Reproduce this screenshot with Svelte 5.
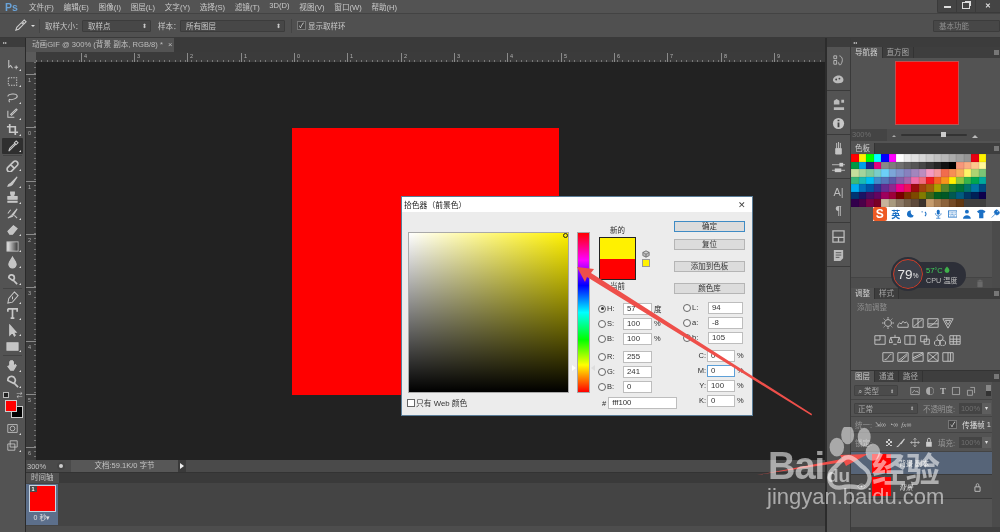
<script>
  const menus = ['文件(F)','编辑(E)','图像(I)','图层(L)','文字(Y)','选择(S)','滤镜(T)','3D(D)','视图(V)','窗口(W)','帮助(H)'];
  const swatches = [
    ['#ff0000','#fff000','#00ff00','#00ffff','#0000ff','#ff00ff','#ffffff','#ebebeb','#e1e1e1','#d7d7d7','#cccccc','#c2c2c2','#b7b7b7','#acacac','#a0a0a0','#959595','#e60012','#fff100'],
    ['#009944','#00a0e9','#1d2088','#e4007f','#898989','#7d7d7d','#707070','#626262','#555555','#464646','#363636','#262626','#111111','#000000','#f7977a','#fbad82','#fdc68c','#fff799'],
    ['#c6df9c','#a4d49d','#81ca9d','#7bcdc9','#6ccff7','#7ca6d8','#8293ca','#8881be','#a286bd','#bc8dbf','#f49bc1','#f5999d','#f16c4d','#f68e54','#fbaf5a','#fff467','#acd372','#7cc576'],
    ['#3bb878','#1abbb4','#00bff3','#438cca','#5574b9','#5c5aa8','#855fa8','#a763a9','#ef6ea8','#f16d7e','#ee1d24','#f16522','#f7941d','#fff100','#8fc63d','#37b44a','#00a650','#00a99e'],
    ['#00aeef','#0072bc','#0054a5','#2f3192','#652c91','#91278f','#ed008c','#ee105a','#9d0a0f','#a1410d','#a36209','#aba000','#588528','#197b30','#007236','#00736a','#0076a4','#004a80'],
    ['#003471','#1b1464','#440e62','#630460','#9e005d','#9e0039','#790000','#7a2e00','#7d4900','#827b00','#3e6617','#045f20','#005826','#005951','#005b7f','#003663','#002157','#0d004c'],
    ['#32004b','#4b0049','#7b0046','#7a0026','#c8b39b','#a99a7e','#8c7965','#75604b','#5f4a3a','#3d332c','#c69c6d','#a77c50','#8c623a','#744a25','#613813']
  ];
  const tools = [
    {d:'M3 1v8l2-2 2 3M9 9h4M11 7v4'},
    {d:'M2.5 3h9v8h-9z', dash:true},
    {d:'M2 6c0-3 9-4 10-1 1 3-6 5-8 4-1 0-1 2 0 3'},
    {d:'M2 4v7h7M5 8l6-6 1 1-6 6z'},
    {d:'M4 1v9h9M1 4h9v9', fat:true},
    {d:'M3 12l1-3 5-5 1 1-5 5zM9 3l2-2 2 2-2 2z', active:true, sep:true},
    {d:'M2 9l6-6a2.5 2.5 0 0 1 4 4l-6 6a2.5 2.5 0 0 1-4-4zM5 6l4 4', fat:true},
    {d:'M2 12c1-3 2-2 3-3l7-7-5 8c-1 1-2 2-5 2z', fill:true},
    {d:'M5 1h4v2l-1 3h4v3H2V6h4L5 3zM2 11h10v1H2z', fill:true},
    {d:'M2 12l4-3 6-7-5 8zM2 7l3-4M9 9l3 3'},
    {d:'M2 9l6-6 4 3-5 6H4z', fill:true},
    {grad:true},
    {d:'M7 1c2 4 4 5 4 8a4 4 0 0 1-8 0c0-3 2-4 4-8z', fill:true},
    {d:'M3 6a3 3 0 1 1 4 3zM7 8l5 5', fat:true, sep:true},
    {d:'M9 1l4 4-6 7-5 1 1-5zM7 6v3'},
    {d:'M2 2h10v3M7 2v10M5 12h4M2 2v3', fat:true},
    {d:'M4 1v11l3-3 2 4 1-1-2-3h3z', fill:true},
    {d:'M1 3h12v8H1z', fill:true, sep:true},
    {d:'M4 7V3h1v3-4h1v4-4h1v4-3h1v5l2-2 1 1-3 5H5L2 8z', fill:true},
    {d:'M2 6a4 4 0 1 1 6 3zM8 8l5 5', fat:true}
  ];
  const adj = [
    ['M7 3a4 4 0 1 0 .01 0M7 0v2M7 12v2M0 7h2M12 7h2M2 2l1 1M11 11l1 1M12 2l-1 1M2 12l1-1','M1 12V9l2-2 2 1 2-3 2 2 2-1 2 2v4z','M1 2h12v10H1zM2 11L12 3M7 2v10','M1 2h12v10H1zM2 11c3-1 7-3 10-8M1 8h12','M1 2h12L7 13zM4 4h6L7 9z'],
    ['M1 2h12v10H1zM7 2v5H1','M7 1v3M2 4h10M2 4l-2 6h4zM12 4l-2 6h4zM5 12h4','M1 2h12v10H1zM7 2v10','M2 2h7v7H2zM6 6h6v6H6z','M7 1a3.5 3.5 0 1 0 .01 0M4 7a3.5 3.5 0 1 0 .01 0M10 7a3.5 3.5 0 1 0 .01 0','M1 2h12v10H1zM1 6h12M1 9h12M5 2v10M9 2v10'],
    ['M1 2h12v10H1zM3 10c5 0 4-6 8-6','M1 2h12v10H1zM2 11L12 3M4 12l8-7','M1 2h12v10H1zM1 10L13 4M1 8l12-6','M1 2h12v10H1zM1 2l12 10M13 2L1 12','M1 2h12v10H1zM7 2v10M10 2v10']
  ];
  const rulerTop = [[45,'4'],[98,'3'],[151,'2'],[205,'1'],[258,'0'],[311,'1'],[365,'2'],[418,'3'],[471,'4'],[525,'5'],[578,'6'],[631,'7'],[685,'8'],[738,'9']];
  const rulerLeft = [[12,'1'],[65,'0'],[119,'1'],[172,'2'],[225,'3'],[279,'4'],[332,'5'],[385,'6']];
</script>

<div class="app">
  <header class="menubar">
    <span class="ps">Ps</span>
    <nav class="menus">{#each menus as m}<span>{m}</span>{/each}</nav>
    <div class="winctl">
      <span class="wb"><i class="min"></i></span>
      <span class="wb"><i class="res"></i></span>
      <span class="wb close">✕</span>
    </div>
  </header>

  <div class="options">
    <svg class="dropper" viewBox="0 0 14 14" width="13" height="13"><path d="M2 12l1-3 5-5 2 2-5 5zM9 3l2-2 2 2-2 2z" fill="none" stroke="#ccc" stroke-width="1.2"/></svg>
    <span class="caret"></span>
    <span class="sep"></span>
    <span class="lbl lw1">取样大小：</span>
    <span class="sel s1">取样点<b>⬍</b></span>
    <span class="lbl lw2">样本：</span>
    <span class="sel s2">所有图层<b>⬍</b></span>
    <span class="sep s3"></span>
    <span class="chk">✓</span>
    <span class="lbl">显示取样环</span>
    <span class="sel workspace">基本功能</span>
  </div>

  <div class="main">
    <aside class="toolbar">
      <div class="tb-head">▸▸</div>
      <div class="tb-grip"></div>
      {#each tools as t}
        <div class="tool" class:active={t.active}>
          <svg viewBox="0 0 14 14" width="13" height="13">
            {#if t.grad}
              <defs><linearGradient id="gr"><stop offset="0" stop-color="#eee"/><stop offset="1" stop-color="#333"/></linearGradient></defs>
              <rect x="1" y="2" width="12" height="10" fill="url(#gr)" stroke="#bbb"/>
            {:else}
              <path d={t.d} fill={t.fill ? '#c4c4c4' : 'none'} stroke="#c8c8c8" stroke-width={t.fat ? 1.8 : 1.1} stroke-dasharray={t.dash ? '1.5 1.2' : 'none'}/>
            {/if}
          </svg>
        </div>
        {#if t.sep}<div class="tool-sep"></div>{/if}
      {/each}
      <div class="mini-colors">
        <span class="mini-a"></span><span class="mini-b">⇄</span>
      </div>
      <div class="fgbg"><span class="bg"></span><span class="fg"></span></div>
      <div class="tool small"><svg viewBox="0 0 14 14" width="13" height="11"><path d="M1 2h12v10H1z" fill="none" stroke="#ccc"/><circle cx="7" cy="7" r="3" fill="none" stroke="#ccc"/></svg></div>
      <div class="tool small"><svg viewBox="0 0 14 14" width="13" height="11"><path d="M4 1h9v8H4zM1 5h9v8H1z" fill="#555" stroke="#ccc"/></svg></div>
    </aside>

    <section class="center">
      <div class="tabbar"><div class="doc-tab">动画GIF @ 300% (背景 副本, RGB/8) * <em>×</em></div></div>
      <div class="workarea">
        <div class="ruler-corner"></div>
        <div class="ruler-top">{#each rulerTop as r}<span style="left:{r[0]}px">{r[1]}</span>{/each}</div>
        <div class="ruler-left">{#each rulerLeft as r}<span style="top:{r[0]}px">{r[1]}</span>{/each}</div>
        <div class="canvas"></div>
      </div>
      <div class="status">
        <span class="zoomv">300%</span>
        <span class="st-icon"></span>
        <span class="docinfo">文档:59.1K/0 字节</span>
        <span class="st-arrow"></span>
      </div>
      <div class="timeline">
        <div class="tl-tabs"><span>时间轴</span></div>
        <div class="tl-body">
          <div class="frame">
            <div class="thumb"><b>1</b></div>
            <div class="delay">0 秒▾</div>
          </div>
        </div>
        <div class="tl-foot"></div>
      </div>
    </section>

    <div class="dock">
      <div class="dock-head"></div>
      <div class="dock-group">
        <svg viewBox="0 0 14 14" width="13" height="13"><path d="M2 2h3v3H2zM2 7h3v4H2zM8 2c4 1 4 6 1 10M8 12l-1-3" fill="none" stroke="#bbb"/></svg>
        <svg viewBox="0 0 14 14" width="13" height="13"><path d="M1 8c0-4 5-6 8-5s4 4 3 6c-1 3-10 3-11-1z" fill="#bbb"/><circle cx="4.500" cy="7" r="1" fill="#444"/><circle cx="8" cy="6" r="1" fill="#444"/></svg>
      </div>
      <div class="dock-group">
        <svg viewBox="0 0 14 14" width="13" height="13"><path d="M2 3l3-2 3 2v4H2zM10 2h3v3h-3zM2 10h11v3H2z" fill="#bbb"/></svg>
        <svg viewBox="0 0 14 14" width="13" height="13"><circle cx="7" cy="7" r="6" fill="#c8c8c8"/><path d="M7 3v1.500M7 6v5" stroke="#444" stroke-width="2"/></svg>
      </div>
      <div class="dock-group">
        <svg viewBox="0 0 14 14" width="13" height="13"><path d="M4 7h6v6H4zM5 1v6M7 0v7M9 1v6" fill="#c4c4c4" stroke="#c4c4c4"/></svg>
        <svg viewBox="0 0 14 14" width="13" height="13"><path d="M0 4h14M0 10h14" stroke="#bbb"/><rect x="8" y="2" width="4" height="4" fill="#ccc"/><rect x="3" y="8" width="7" height="4" fill="#ccc"/></svg>
      </div>
      <div class="dock-group">
        <span class="dock-a">A|</span>
        <span class="dock-p">¶</span>
      </div>
      <div class="dock-group">
        <svg viewBox="0 0 14 14" width="13" height="13"><path d="M1 1h12v12H1zM1 8h12M7 8v5" fill="none" stroke="#bbb" stroke-width="1.4"/></svg>
        <svg viewBox="0 0 14 14" width="13" height="13"><path d="M2 1h10v9l-3 3H2z" fill="#bbb"/><path d="M4 4h6M4 6.500h6M4 9h4" stroke="#555"/></svg>
      </div>
    </div>

    <div class="panels">
      <div class="panel-head"><span>◂◂</span></div>

      <div class="ptabs"><span class="on">导航器</span><span>直方图</span><i class="pmenu"></i></div>
      <div class="nav-view"><div class="nav-red"></div></div>
      <div class="nav-foot">
        <span class="nav-pct">300%</span>
        <span class="tri sm"></span>
        <span class="track"><i></i></span>
        <span class="tri"></span>
      </div>

      <div class="ptabs t2"><span class="on">色板</span><i class="pmenu"></i></div>
      <div class="swatches">
        {#each swatches as row}
          <div class="swrow">{#each row as c}<span style="background:{c}"></span>{/each}</div>
        {/each}
      </div>
      <div class="sw-fill"><div class="sw-bar"><svg viewBox="0 0 14 14" width="8" height="9"><path d="M3 4h8v9H3zM2 2.500h10M5 2.500V1h4v1.500" fill="#6a6a6a" stroke="#6a6a6a"/></svg></div></div>

      <div class="ptabs"><span class="on">调整</span><span>样式</span><i class="pmenu"></i></div>
      <div class="adj">
        <div class="adj-title">添加调整</div>
        {#each adj as row}
          <div class="adj-row">
            {#each row as d}
              <svg viewBox="0 0 14 14" width="12" height="12"><path {d} fill="none" stroke="#c4c4c4" stroke-width="1.1"/></svg>
            {/each}
          </div>
        {/each}
      </div>

      <div class="ptabs"><span class="on">图层</span><span>通道</span><span>路径</span><i class="pmenu"></i></div>
      <div class="layers">
        <div class="lrow filter">
          <span class="minisel f1">⌕ 类型 <b>⬍</b></span>
          <span class="ficons">
            <svg viewBox="0 0 14 14" width="10" height="10"><path d="M1 2h12v10H1zM3 10l3-4 2 2 2-1 2 3" fill="none" stroke="#bbb"/></svg>
            <svg viewBox="0 0 14 14" width="10" height="10"><circle cx="7" cy="7" r="5.500" fill="#aaa"/><path d="M7 2a5 5 0 0 1 0 10z" fill="#555"/></svg>
            <span class="ft">T</span>
            <svg viewBox="0 0 14 14" width="10" height="10"><path d="M2 2h10v10H2z" fill="none" stroke="#bbb"/></svg>
            <svg viewBox="0 0 14 14" width="10" height="10"><path d="M2 6h7v7H2zM6 2h6v8" fill="none" stroke="#bbb"/></svg>
          </span>
          <span class="ftoggle"></span>
        </div>
        <div class="lrow blend">
          <span class="minisel f2">正常 <b>⬍</b></span>
          <span class="dimlbl">不透明度:</span>
          <span class="num">100%</span><span class="numbtn">▾</span>
        </div>
        <div class="lrow unify">
          <span class="dimlbl">统一:</span>
          <span class="gl">⇲∞</span><span class="gl">◔∞</span><span class="gl"><i>fx</i>∞</span>
          <span class="chk c2">✓</span><span class="prop">传播帧</span><span class="one">1</span>
        </div>
        <div class="lrow lockrow">
          <span class="dimlbl lock-l">锁定:</span>
          <span class="checker"></span>
          <svg viewBox="0 0 14 14" width="11" height="11"><path d="M1 13c3 0 3-2 4-3l7-8-5 7" fill="none" stroke="#ccc" stroke-width="1.5"/></svg>
          <svg viewBox="0 0 14 14" width="11" height="11"><path d="M7 1v12M1 7h12M5 3l2-2 2 2M5 11l2 2 2-2M3 5L1 7l2 2M11 5l2 2-2 2" fill="none" stroke="#ccc"/></svg>
          <svg viewBox="0 0 14 14" width="11" height="11"><path d="M3 6h8v7H3z" fill="#ccc"/><path d="M5 6V3a2 2 0 0 1 4 0v3" fill="none" stroke="#ccc" stroke-width="1.3"/></svg>
          <span class="dimlbl fill-l">填充:</span>
          <span class="num">100%</span><span class="numbtn">▾</span>
        </div>
        <div class="layer selected">
          <span class="eye"></span><span class="lthumb"></span><span class="lname">背景 副本</span>
        </div>
        <div class="layer">
          <svg class="eye-ic" viewBox="0 0 14 10" width="9" height="7"><path d="M1 5c3-5 9-5 12 0-3 5-9 5-12 0z" fill="none" stroke="#ccc"/><circle cx="7" cy="5" r="1.500" fill="#ccc"/></svg>
          <span class="lthumb"></span><span class="lname it">背景</span>
          <svg class="lock-ic" viewBox="0 0 14 14" width="9" height="9"><path d="M3 6h8v7H3z" fill="none" stroke="#bbb" stroke-width="1.500"/><path d="M5 6V3a2 2 0 0 1 4 0v3" fill="none" stroke="#bbb" stroke-width="1.300"/></svg>
        </div>
        <div class="lempty"></div>
        <div class="lfoot"></div>
      </div>
    </div>
  </div>

  <div class="artboard"></div>

  <div class="dialog">
    <div class="dtitle"><span>拾色器（前景色）</span><em>✕</em></div>
    <div class="dbody">
      <div class="left-col">
        <div class="pick-row">
          <div class="field"><span class="cursor"></span></div>
          <div class="hue"><span class="h-l"></span><span class="h-r"></span></div>
        </div>
        <label class="web"><span class="box"></span>只有 Web 颜色</label>
      </div>
      <div class="mid-col">
        <div class="preview-wrap">
          <div class="pv-col">
            <span class="pv-t">新的</span>
            <div class="pv"><i class="pv-n"></i><i class="pv-c"></i></div>
            <span class="pv-t">当前</span>
          </div>
          <div class="gamut">
            <svg viewBox="0 0 10 10" width="8" height="8"><path d="M5 1l4 2v4l-4 2-4-2V3zM1 3l4 2 4-2M5 5v4" fill="#bbb" stroke="#555" stroke-width=".8"/></svg>
            <span class="gbox"></span>
          </div>
        </div>
        <div class="vals">
          {#each [['H',57,'度',true],['S',100,'%'],['B',100,'%']] as v, i}
            <div class="vrow"><span class="radio" class:sel-r={v[3]}></span><span class="vl">{v[0]}:</span><span class="inp">{v[1]}</span><span class="unit">{v[2]}</span></div>
          {/each}
          <div class="vgap"></div>
          {#each [['R',255],['G',241],['B',0]] as v}
            <div class="vrow"><span class="radio"></span><span class="vl">{v[0]}:</span><span class="inp">{v[1]}</span></div>
          {/each}
        </div>
      </div>
      <div class="right-col">
        <div class="btns">
          <span class="btn primary">确定</span>
          <span class="btn">复位</span>
          <span class="btn g1">添加到色板</span>
          <span class="btn g1">颜色库</span>
        </div>
        <div class="vals lab">
          {#each [['L','94'],['a','-8'],['b','105']] as v}
            <div class="vrow"><span class="radio"></span><span class="vl">{v[0]}:</span><span class="inp w">{v[1]}</span></div>
          {/each}
          <div class="vgap"></div>
          {#each [['C','0'],['M','0',true],['Y','100'],['K','0']] as v}
            <div class="vrow cm"><span class="vl r">{v[0]}:</span><span class="inp n" class:focus={v[2]}>{v[1]}</span><span class="unit">%</span></div>
          {/each}
        </div>
      </div>
      <div class="hex"><span>#</span><span class="inp hx">fff100</span></div>
    </div>
  </div>

  <svg class="arrows" viewBox="0 0 1000 532" width="1000" height="532">
    <path d="M577 267L594 269 591 273 812 414 811.500 415.500 587 277 585 282z" fill="#ee4f4a"/>
    <path d="M757 475L842 459 840 455 868 454 846 466 844 462z" fill="#ee4f4a"/>
  </svg>

  <div class="wm">
    <svg class="paw" viewBox="0 0 100 100" width="72" height="72">
      <g fill="#fff" fill-opacity=".5">
        <ellipse cx="22" cy="28" rx="10" ry="13"/>
        <ellipse cx="37" cy="11" rx="9" ry="13"/>
        <ellipse cx="60" cy="14" rx="9" ry="13"/>
        <ellipse cx="72" cy="35" rx="10" ry="12"/>
      </g>
      <path d="M38 42c9 0 12 8 22 15 13 10 8 30-8 27-10-2-16-2-24 0-17 3-21-16-11-26 8-6 11-16 21-16z" fill="none" stroke="#fff" stroke-opacity=".55" stroke-width="6"/>
    </svg>
    <span class="wm-bai">Bai</span>
    <span class="wm-du">du</span>
    <span class="wm-jy">经验</span>
    <span class="wm-url">jingyan.baidu.com</span>
  </div>

  <div class="sogou">
    <span class="s-logo">S</span>
    <span class="s-t">英</span>
    <svg viewBox="0 0 12 12" width="10" height="10"><path d="M7 1a5 5 0 1 0 4 7A5 5 0 0 1 7 1z" fill="#1a6fc4"/></svg>
    <svg viewBox="0 0 12 12" width="10" height="10"><circle cx="3" cy="3" r="1" fill="#1a6fc4"/><path d="M7 3c2 2 2 4 0 6" stroke="#1a6fc4" stroke-width="1.500" fill="none"/></svg>
    <svg viewBox="0 0 12 12" width="10" height="10"><rect x="4" y="0" width="4" height="7" rx="2" fill="#1a6fc4"/><path d="M2 5c0 5 8 5 8 0M6 9v3M3 12h6" stroke="#1a6fc4" fill="none"/></svg>
    <svg viewBox="0 0 12 12" width="11" height="10"><rect x=".5" y="2" width="11" height="8" fill="none" stroke="#1a6fc4"/><path d="M2 4.500h8M2 6.500h8M3 8.500h6" stroke="#1a6fc4" stroke-dasharray="1 .7"/></svg>
    <svg viewBox="0 0 12 12" width="11" height="10"><circle cx="5" cy="3" r="2.500" fill="#1a6fc4"/><path d="M0 12c0-6 10-6 10 0z" fill="#1a6fc4"/></svg>
    <svg viewBox="0 0 12 12" width="10" height="10"><path d="M0 2l4-2h4l4 2-2 3-1-1v8H3V4L2 5z" fill="#1a6fc4"/></svg>
    <svg viewBox="0 0 12 12" width="10" height="10"><path d="M1 11l5-5a3 3 0 0 1 4-5L8 3l1 1 2-2a3 3 0 0 1-5 4" fill="#1a6fc4" stroke="#1a6fc4"/></svg>
  </div>

  <div class="cpu">
    <div class="ring">79<small>%</small></div>
    <div class="cpu-t">
      <div class="temp">57°C <svg viewBox="0 0 10 12" width="6" height="8"><path d="M5 0c3 3 4 5 4 7a4 4 0 0 1-8 0c0-2 1-4 4-7z" fill="#3fb04a"/></svg></div>
      <div class="cpu-l">CPU 温度</div>
    </div>
  </div>
</div>

<style>
  :global(body){margin:0;background:#535353;}
  .app{position:relative;width:1000px;height:532px;overflow:hidden;background:#535353;color:#c4c4c4;font:7.5px "Liberation Sans","Noto Sans CJK SC",sans-serif;display:flex;flex-direction:column;filter:blur(.35px);}

  .menubar{height:13px;display:flex;align-items:center;flex:none;background:#535353;}
  .ps{color:#6aa3d8;font:bold 10.5px "Liberation Sans",sans-serif;margin-left:5px;width:24px;}
  .menus{display:flex;gap:9.7px;font-size:7.6px;color:#c9c9c9;}
  .winctl{margin-left:auto;display:flex;align-self:flex-start;height:11.500px;background:#444;border:solid #3a3a3a;border-width:0 0 1px 1px;border-radius:0 0 0 2px;}
  .wb{width:18px;display:flex;align-items:center;justify-content:center;border-right:1px solid #3a3a3a;color:#ddd;font-size:7px;}
  .wb.close{width:24px;border-right:0;font-weight:bold;}
  .min{width:7px;height:2px;background:#ddd;display:block;margin-top:3px;}
  .res{width:6px;height:5px;border:1px solid #ddd;display:block;box-shadow:2px -2px 0 -1px #ddd;}

  .options{height:25px;flex:none;display:flex;align-items:center;border-top:1px solid #434343;border-bottom:1px solid #3a3a3a;box-sizing:border-box;background:#505050;}
  .dropper{margin-left:14px;}
  .caret{width:0;height:0;border:2px solid transparent;border-top-color:#ddd;margin:2px 0 0 4px;}
  .sep{width:1px;height:14px;background:#444;margin:0 5px 0 4px;}
  .s3{margin:0 5px 0 6px;}
  .lbl{color:#c9c9c9;font-size:7.500px;white-space:nowrap;}
  .lw1{width:37px;}
  .lw2{width:22px;}
  .sel{height:12px;box-sizing:border-box;background:#474747;border:1px solid #3c3c3c;border-radius:1px;color:#c9c9c9;display:flex;align-items:center;padding-left:5px;font-size:7.500px;position:relative;}
  .sel b{position:absolute;right:3px;font-weight:normal;font-size:6px;}
  .s1{width:69px;margin-right:7px;}
  .s2{width:105px;}
  .chk{width:9px;height:9px;box-sizing:border-box;background:#444;border:1px solid #777;color:#ddd;font-size:7px;line-height:7px;text-align:center;margin-right:2px;flex:none;}
  .workspace{margin-left:auto;width:67px;color:#8f8f8f;}

  .main{flex:1;display:flex;min-height:0;}
  .toolbar{width:26px;box-sizing:border-box;flex:none;background:#535353;border-right:1px solid #2a2a2a;display:flex;flex-direction:column;align-items:center;}
  .tb-head{height:9px;width:100%;background:#3c3c3c;font-size:4px;line-height:9px;padding-left:3px;box-sizing:border-box;flex:none;}
  .tb-grip{height:10px;flex:none;}
  .tool{width:21px;height:16.200px;flex:none;display:flex;align-items:center;justify-content:center;position:relative;}
  .tool::after{content:"";position:absolute;right:2px;bottom:2px;border:1px solid transparent;border-right-color:#ddd;border-bottom-color:#ddd;}
  .tool.active{background:#2f2f2f;border-radius:1px;}
  .tool.small{height:17px;}
  .tool-sep{width:19px;height:1px;margin:1px 0;background:#434343;flex:none;}
  .mini-colors{width:20px;height:8px;display:flex;justify-content:space-between;align-items:center;margin-top:1px;flex:none;}
  .mini-a{width:6px;height:6px;background:#222;border:1px solid #bbb;box-sizing:border-box;}
  .mini-b{font-size:6px;line-height:6px;}
  .fgbg{position:relative;width:20px;height:20px;flex:none;margin:1px 0 0;}
  .fg,.bg{position:absolute;width:10px;height:10px;border:1px solid #ccc;}
  .fg{left:2px;top:0;background:#f00;}
  .bg{left:8px;top:6px;background:#000;}

  .center{flex:1;min-width:0;display:flex;flex-direction:column;border-right:2px solid #2c2c2c;}
  .tabbar{height:14px;flex:none;background:#3a3a3a;display:flex;}
  .doc-tab{background:#535353;color:#bdbdbd;padding:0 6px;line-height:14px;font-size:7.600px;width:148px;box-sizing:border-box;white-space:nowrap;}
  .doc-tab em{font-style:normal;margin-left:3px;}
  .workarea{flex:1;display:grid;grid-template:10px 1fr / 10px 1fr;min-height:0;}
  .ruler-corner{background:#5a5a5a;}
  .ruler-top{position:relative;background:repeating-linear-gradient(90deg,#777 0 1px,transparent 1px 5.330px) bottom/100% 2px no-repeat,#3b3b3b;overflow:hidden;}
  .ruler-top span{position:absolute;top:1px;font-size:5.500px;line-height:7px;color:#b0b0b0;border-left:1px solid #8a8a8a;padding-left:2px;height:9px;}
  .ruler-left{position:relative;background:repeating-linear-gradient(#777 0 1px,transparent 1px 5.330px) right/2px 100% no-repeat,#3b3b3b;overflow:hidden;}
  .ruler-left span{position:absolute;left:0;width:10px;padding:2px 0 0 2px;box-sizing:border-box;font-size:5.500px;line-height:7px;color:#b0b0b0;border-top:1px solid #8a8a8a;}
  .canvas{background:#222;}
  .status{height:12px;flex:none;background:#4a4a4a;display:flex;align-items:center;color:#c4c4c4;}
  .zoomv{width:31px;padding-left:1px;box-sizing:border-box;}
  .st-icon{width:8px;height:8px;background:#ccc;border-radius:50%;margin-right:6px;border:2px solid #444;box-sizing:border-box;flex:none;}
  .docinfo{width:107px;height:100%;line-height:12px;text-align:center;background:#575757;}
  .st-arrow{width:8px;height:12px;background:#3a3a3a;position:relative;}
  .st-arrow::after{content:"";position:absolute;left:2px;top:3px;border:3px solid transparent;border-left:4px solid #eee;}
  .timeline{height:60px;flex:none;background:#444;display:flex;flex-direction:column;border-top:1px solid #333;box-sizing:border-box;}
  .tl-tabs{height:10px;background:#3a3a3a;flex:none;display:flex;}
  .tl-tabs span{background:#4e4e4e;padding:0 5px;line-height:10px;color:#c0c0c0;}
  .tl-body{flex:1;min-height:0;}
  .frame{width:32px;height:41px;background:#5c6f8b;margin-top:1px;box-sizing:border-box;padding:1px 2px;}
  .thumb{width:27px;height:27px;border:1px solid #c8d4e0;background:#f00;position:relative;margin:0 auto;box-sizing:border-box;}
  .thumb b{position:absolute;left:0;top:0;width:7px;height:6px;background:#4a4a4a;color:#fff;font-size:5.500px;line-height:6px;text-align:center;}
  .delay{text-align:center;color:#e0e0e0;font-size:7px;line-height:10px;margin-top:1px;}
  .tl-foot{height:6px;background:#4d4d4d;flex:none;}

  .dock{width:24px;flex:none;background:#535353;border-right:1px solid #3a3a3a;box-sizing:border-box;display:flex;flex-direction:column;align-items:center;}
  .dock-head{height:9px;width:100%;background:#3c3c3c;flex:none;}
  .dock-group{width:100%;padding:7px 0 4px;display:flex;flex-direction:column;align-items:center;gap:6px;border-bottom:1px solid #3a3a3a;box-sizing:border-box;height:44px;flex:none;}
  .dock-a{font:11px/12px "Liberation Sans",sans-serif;color:#bbb;}
  .dock-p{font:12px/12px "Liberation Serif",serif;color:#bbb;font-weight:bold;}

  .panels{width:149px;flex:none;background:#535353;display:flex;flex-direction:column;}
  .panel-head{height:9px;background:#3c3c3c;flex:none;font-size:4px;line-height:9px;padding-left:2px;}
  .ptabs{height:11px;flex:none;display:flex;background:#3e3e3e;position:relative;color:#a8a8a8;}
  .ptabs span{padding:0 4px;line-height:11px;border-right:1px solid #333;font-size:7.500px;white-space:nowrap;}
  .ptabs .on{background:#535353;color:#cfcfcf;}
  .pmenu{position:absolute;right:1px;top:3px;width:5px;height:5px;background:#777;}
  .t2{margin-top:2px;}
  .nav-view{height:71px;flex:none;display:flex;align-items:center;justify-content:center;padding-left:2px;box-sizing:border-box;}
  .nav-red{width:62px;height:62px;background:#f00;border:1px solid #c05050;margin-top:-1px;}
  .nav-foot{height:12px;flex:none;display:flex;align-items:center;background:#4c4c4c;}
  .nav-pct{width:36px;height:100%;line-height:12px;background:#444;color:#6e6e6e;padding-left:1px;box-sizing:border-box;}
  .tri{width:0;height:0;border:3px solid transparent;border-bottom:3px solid #bbb;margin:0 5px;}
  .tri.sm{border-width:2px;border-bottom-color:#aaa;}
  .track{flex:none;width:66px;height:2px;background:#333;position:relative;border-radius:1px;}
  .track i{position:absolute;left:40px;top:-2px;width:5px;height:5px;background:#ccc;}
  .swatches{flex:none;background:#3f3f3f;width:135px;height:53px;}
  .swrow{display:flex;height:7.500px;}
  .swrow span{width:7.500px;box-shadow:inset 0 0 0 .25px #0003;flex:none;}
  .sw-fill{height:81px;flex:none;position:relative;border-right:8px solid #4b4b4b;background:#535353;box-sizing:border-box;}
  .sw-bar{position:absolute;left:0;right:0;bottom:0;height:11px;background:#4d4d4d;border-top:1px solid #444;display:flex;align-items:center;justify-content:flex-end;padding-right:8px;box-sizing:border-box;}
  .adj{height:72px;flex:none;display:flex;flex-direction:column;align-items:center;border-bottom:1px solid #333;box-sizing:border-box;}
  .adj-title{align-self:flex-start;margin:4px 0 2px 6px;color:#909090;font-size:7.500px;line-height:9px;}
  .adj-row{display:flex;gap:3px;height:17px;align-items:center;justify-content:center;padding-right:16px;}
  .layers{flex:1;min-height:0;display:flex;flex-direction:column;border-right:8px solid #4b4b4b;}
  .lrow{display:flex;align-items:center;flex:none;border-bottom:1px solid #444;box-sizing:border-box;padding-left:3px;gap:4px;}
  .filter{height:18px;}
  .blend{height:17px;}
  .unify{height:16px;padding-left:4px;gap:3px;}
  .lockrow{height:19px;padding-left:4px;}
  .minisel{height:11px;background:#4b4b4b;border:1px solid #424242;box-sizing:border-box;display:flex;align-items:center;padding:0 3px;justify-content:space-between;color:#aaa;border-radius:1px;white-space:nowrap;}
  .minisel b{font-weight:normal;font-size:5px;}
  .f1{width:44px;}
  .f2{width:69px;}
  .ficons{display:flex;gap:5px;align-items:center;margin-left:8px;}
  .ft{font:bold 9px "Liberation Serif",serif;color:#bbb;}
  .ftoggle{width:5px;height:11px;background:linear-gradient(#888 50%,#333 50%);margin-left:auto;margin-right:1px;}
  .dimlbl{color:#969696;white-space:nowrap;}
  .blend .dimlbl{margin-left:1px;}
  .num{width:23px;height:11px;background:#444;color:#6f6f6f;line-height:11px;text-align:center;margin-left:auto;flex:none;}
  .numbtn{width:9px;height:11px;background:#5e5e5e;color:#ddd;line-height:11px;text-align:center;font-size:6px;flex:none;margin-left:-4px;margin-right:1px;}
  .gl{color:#bbb;font-size:7px;white-space:nowrap;}
  .gl i{font-family:"Liberation Serif",serif;}
  .c2{margin-left:auto;}
  .prop{color:#ddd;white-space:nowrap;}
  .one{color:#ddd;margin-left:-1px;padding-right:1px;}
  .lock-l{width:30px;}
  .fill-l{margin-left:auto;}
  .lockrow .num{margin-left:0;}
  .checker{width:7px;height:7px;background:conic-gradient(#ccc 25%,#555 0 50%,#ccc 0 75%,#555 0) 0 0/4px 4px;}
  .layer{height:24px;flex:none;display:flex;align-items:center;background:#4c4c4c;border-bottom:1px solid #3a3a3a;box-sizing:border-box;position:relative;}
  .layer.selected{background:#566478;height:23px;}
  .eye,.eye-ic{width:9px;margin:0 6px;flex:none;}
  .lthumb{width:19px;height:19px;background:#f00;margin-right:8px;flex:none;}
  .lname{color:#e8e8e8;font-size:7px;}
  .it{font-style:italic;}
  .lock-ic{position:absolute;right:10px;top:8px;}
  .lempty{flex:1;background:#535353;}
  .lfoot{height:5px;background:#414141;margin-right:-8px;}

  .artboard{position:absolute;left:292px;top:128px;width:267px;height:267px;background:#f00;}

  .dialog{position:absolute;left:401px;top:196px;width:352px;height:220px;background:#ececec;border:1px solid #5a7d98;box-sizing:border-box;color:#2e2e2e;font-size:7.500px;display:flex;flex-direction:column;}
  .dtitle{height:15px;background:#fff;flex:none;display:flex;align-items:center;justify-content:space-between;padding:0 6px 0 2px;font-size:7.800px;color:#222;}
  .dtitle em{font-style:normal;font-size:9px;color:#444;}
  .dbody{flex:1;display:flex;position:relative;padding:20px 0 0 6px;}
  .left-col{width:190px;flex:none;}
  .pick-row{display:flex;gap:8px;}
  .field{width:161px;height:161px;box-sizing:border-box;border:1px solid #a9a9a9;background:linear-gradient(transparent,#000),linear-gradient(90deg,#fff,#fff100);position:relative;}
  .cursor{position:absolute;right:0;top:0;width:5px;height:5px;border:1px solid #222;border-radius:50%;box-sizing:border-box;}
  .hue{width:13px;height:161px;box-sizing:border-box;border:1px solid #a9a9a9;position:relative;background:linear-gradient(#f00,#f0f 17%,#00f 33%,#0ff 50%,#0f0 67%,#ff0 83%,#f00);}
  .h-l,.h-r{position:absolute;top:132px;width:0;height:0;border:3px solid transparent;}
  .h-l{left:-6px;border-left:4px solid #fff;}
  .h-r{right:-6px;border-right:4px solid #ddd;}
  .web{display:flex;align-items:center;gap:1px;margin:4px 0 0 -1px;color:#333;font-size:7.800px;}
  .box{width:8px;height:8px;background:#fff;border:1px solid #666;box-sizing:border-box;}
  .mid-col{width:77px;flex:none;margin-top:-6px;}
  .preview-wrap{display:flex;height:75px;}
  .pv-col{width:37px;margin-left:1px;display:flex;flex-direction:column;align-items:center;}
  .pv-t{line-height:10px;height:10px;}
  .pv{width:37px;height:43px;box-sizing:border-box;border:1px solid #222;display:flex;flex-direction:column;margin-top:1px;flex:none;}
  .pv i{flex:1;display:block;}
  .pv-n{background:#fff100;}
  .pv-c{background:#f00;}
  .pv-col .pv-t:last-child{margin-top:2px;}
  .gamut{display:flex;flex-direction:column;align-items:center;gap:1px;margin:24px 0 0 6px;}
  .gbox{width:8px;height:8px;background:#fff100;border:1px solid #999;box-sizing:border-box;}
  .vals{display:flex;flex-direction:column;}
  .vrow{display:flex;align-items:center;height:15px;flex:none;}
  .vgap{height:3px;}
  .radio{width:8px;height:8px;border:1px solid #666;border-radius:50%;background:#f5f5f5;box-sizing:border-box;flex:none;position:relative;}
  .sel-r::after{content:"";position:absolute;inset:1.500px;background:#333;border-radius:50%;}
  .vl{width:17px;padding-left:1px;box-sizing:border-box;flex:none;}
  .inp{background:#fff;border:1px solid #bdbdbd;box-sizing:border-box;height:12px;line-height:10px;padding-left:3px;width:29px;font-size:7.800px;color:#333;flex:none;}
  .unit{margin-left:2px;}
  .right-col{flex:1;margin-top:-11px;margin-left:-1px;}
  .btns{display:flex;flex-direction:column;gap:7px;width:71px;}
  .btn{height:11px;line-height:9px;text-align:center;background:#dcdcdc;border:1px solid #b5b5b5;box-sizing:border-box;color:#333;}
  .btn.primary{border:1.200px solid #3f8bc4;}
  .g1{margin-top:4px;}
  .lab{margin:6px 0 0 9px;}
  .inp.w{width:35px;}
  .vl.r{width:24px;text-align:right;padding-right:1px;}
  .inp.n{width:28px;}
  .focus{border-color:#5da0d8;}
  .hex{position:absolute;left:200px;top:185px;display:flex;align-items:center;gap:2px;}
  .inp.hx{width:69px;}

  .arrows{position:absolute;left:0;top:0;pointer-events:none;}

  .wm{position:absolute;left:760px;top:420px;width:200px;height:100px;color:#fff;}
  .paw{position:absolute;left:61px;top:7px;}
  .wm-bai,.wm-du,.wm-jy,.wm-url{position:absolute;white-space:nowrap;opacity:.55;font-family:"Liberation Sans",sans-serif;}
  .wm-bai{left:8px;top:26px;font:bold 38px/40px "Liberation Sans",sans-serif;letter-spacing:-1px;}
  .wm-du{left:67px;top:46px;font:bold 19px/20px "Liberation Sans",sans-serif;}
  .wm-jy{left:112px;top:29px;font:bold 34px/38px "Noto Sans CJK SC",sans-serif;}
  .wm-url{left:7px;top:65px;font-size:22px;line-height:24px;}

  .sogou{position:absolute;left:873px;top:207px;width:127px;height:14px;background:#fff;display:flex;align-items:center;gap:5.500px;color:#1a6fc4;}
  .s-logo{width:16px;height:14px;background:#ee5a24;color:#fff;font:bold 12px/14px "Liberation Sans",sans-serif;text-align:center;border-radius:2px;margin-right:-1px;}
  .s-t{font-size:9px;font-weight:bold;}

  .cpu{position:absolute;left:894px;top:262px;height:26px;width:72px;background:#2d2f38;border-radius:13px;display:flex;align-items:center;}
  .ring{width:30px;height:30px;margin:-2px 0 0 -1px;border:1.500px solid #d43a24;outline:2px solid #2d2f38;box-sizing:border-box;border-radius:50%;background:#3d3f48;display:flex;align-items:center;justify-content:center;font-size:13.500px;color:#e6e6e6;flex:none;}
  .ring small{font-size:6.500px;margin-top:3px;}
  .cpu-t{margin-left:3px;line-height:9px;}
  .temp{color:#3fd05a;font-size:7.500px;display:flex;align-items:center;gap:1px;}
  .cpu-l{color:#bdbdbd;font-size:7.200px;margin-top:1px;white-space:nowrap;}
</style>
